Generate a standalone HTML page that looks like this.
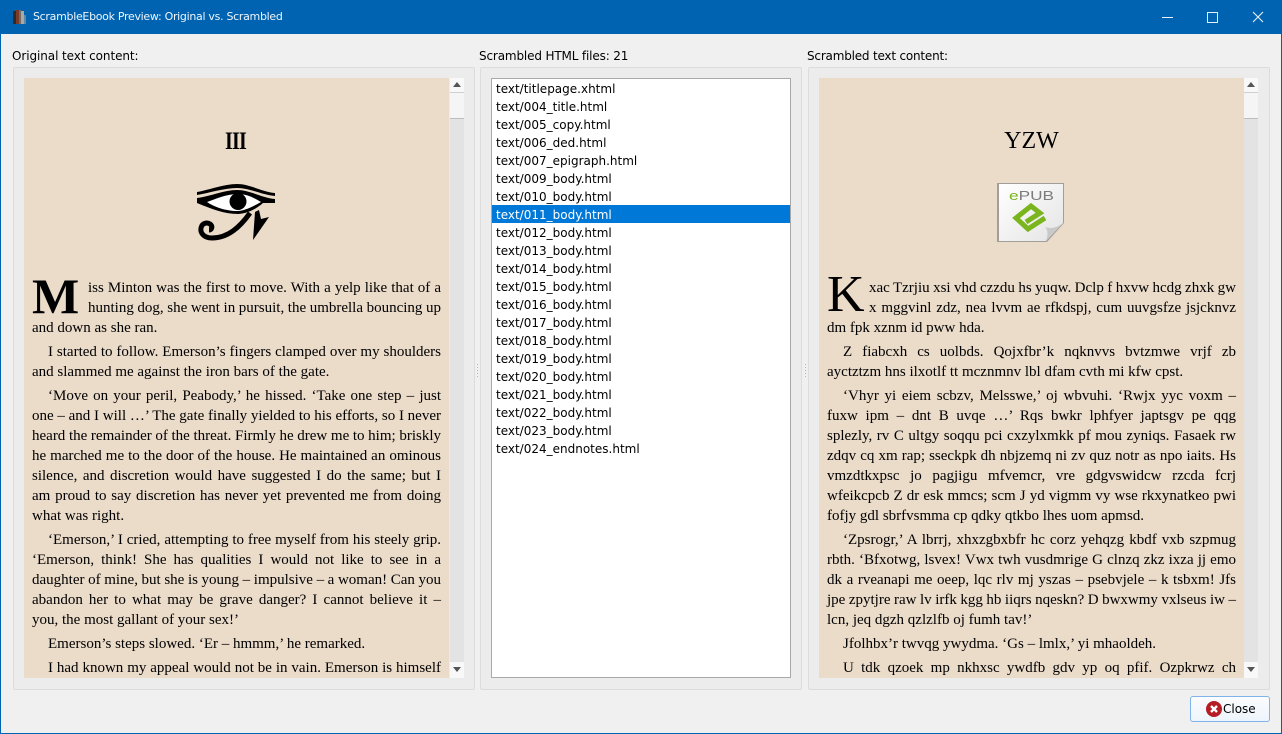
<!DOCTYPE html>
<html><head><meta charset="utf-8"><title>ScrambleEbook Preview</title>
<style>
html,body{margin:0;padding:0;width:1282px;height:734px;overflow:hidden;background:#f0f0f0}
div,span,svg{position:absolute}
.ui{font-family:"DejaVu Sans",sans-serif;font-size:12px;line-height:18px;color:#000;white-space:nowrap}
.lab{letter-spacing:-.08px}
.panel{border:1px solid #dcdcdc;background:#ececec;border-radius:2px;box-sizing:border-box}
.view{background:#ebdbc9;overflow:hidden;top:78px;height:600px;width:425px}
.l{font-family:"Liberation Serif",serif;font-size:15px;line-height:20px;height:20px;margin-top:1px;color:#000;white-space:nowrap;left:8px;width:409px}
.j{white-space:normal;text-align:justify;text-align-last:justify;word-spacing:-1.5px}
.i{left:24px;width:393px}
.d{left:64px;width:353px}
.sb{top:78px;width:14px;height:600px;background:#e3e3e3}
.b{left:0;width:14px;background:#f8f8f8}
.th{left:0;top:14px;width:14px;height:27px;background:#f5f5f5;border-top:1px solid #cfcfcf;border-bottom:1px solid #bdbdbd;box-sizing:border-box}
.up{left:3px;top:4px;width:0;height:0;border-left:4px solid transparent;border-right:4px solid transparent;border-bottom:5px solid #555}
.dn{left:3px;top:5px;width:0;height:0;border-left:4px solid transparent;border-right:4px solid transparent;border-top:5px solid #555}
.f{left:4px;height:18px;width:294px;line-height:20px}
.dots{width:1px;height:14px;top:364px;background:repeating-linear-gradient(#b5b5b5 0 1px,transparent 1px 3px)}
</style></head>
<body>
<div style="left:0;top:0;width:1282px;height:34px;background:#0063b1"></div>
<div style="left:0;top:34px;width:1px;height:700px;background:#0063b1"></div>
<div style="left:1281px;top:34px;width:1px;height:700px;background:#0063b1"></div>
<div style="left:0;top:733px;width:1282px;height:1px;background:#0063b1"></div>
<svg style="left:12px;top:9px" width="16" height="16" viewBox="0 0 16 16"><rect x="1" y="2" width="3" height="13" fill="#2b2b2b"/><rect x="4" y="1" width="3" height="14" fill="#7a3a28"/><rect x="7" y="1" width="2" height="14" fill="#6d6d6d"/><rect x="9" y="2" width="3" height="13" fill="#a9a9a0"/><rect x="12" y="6" width="2" height="9" fill="#5f87a8"/></svg>
<div class="ui" style="left:33px;top:8px;color:#eef5fb;font-size:11px;letter-spacing:-.3px">ScrambleEbook Preview: Original vs. Scrambled</div>
<div style="left:1162px;top:17px;width:11px;height:1px;background:#e8f2fa"></div>
<div style="left:1207px;top:12px;width:9px;height:9px;border:1px solid #e8f2fa"></div>
<svg style="left:1252px;top:11px" width="12" height="12" viewBox="0 0 12 12"><path d="M1 1L11 11M11 1L1 11" stroke="#e8f2fa" stroke-width="1.1" fill="none"/></svg>

<div class="ui lab" style="left:12px;top:47px">Original text content:</div>
<div class="ui lab" style="left:479px;top:47px;letter-spacing:-.15px">Scrambled HTML files: 21</div>
<div class="ui lab" style="left:807px;top:47px;letter-spacing:-.2px">Scrambled text content:</div>

<div class="panel" style="left:13px;top:67px;width:462px;height:623px"></div>
<div class="panel" style="left:480px;top:67px;width:322px;height:623px"></div>
<div class="panel" style="left:808px;top:67px;width:462px;height:623px"></div>
<div class="dots" style="left:477px"></div>
<div class="dots" style="left:805px"></div>

<!-- LEFT VIEW -->
<div class="view" style="left:24px">
<div style="left:-1px;top:51px;width:425px;height:26px;text-align:center;font:bold 25px/26px 'Liberation Serif',serif;color:#000;transform:scaleX(.8);letter-spacing:-1px">III</div>
<svg style="left:170px;top:103px" width="84" height="64" viewBox="0 0 84 64">
<path d="M3 11C15 9 30 3 43 3C56 3 68 11 81 12V15C68 14 56 7 43 7C30 7 15 12 3 14Z" fill="#000"/>
<path d="M3 17C18 15 30 9 43 9C56 9 68 17 81 18V22L69 22C60 30 50 33 44 33C30 33 18 28 3 22Z" fill="#000"/>
<path d="M13 21C22 18 32 13 44 13C54 13 62 18 67 21C58 26 50 30 43 30C32 30 20 26 13 21Z" fill="#fff"/>
<circle cx="44" cy="20.5" r="8.5" fill="#000"/>
<path d="M61 31L59 59L75 36L67 38L65 29Z" fill="#000"/>
<path d="M56 32C46 46 34 57 18 57C10 57 6 52 7 47C8 42 13 41 16 43C19 45 18 49 15 49" fill="none" stroke="#000" stroke-width="5"/>
</svg>
<div style="left:8px;top:196px;width:52px;height:44px;font:bold 50px/44px 'Liberation Serif',serif;color:#000;white-space:nowrap">M</div>
<div class="l j d" style="top:199px">iss Minton was the first to move. With a yelp like that of a</div>
<div class="l j d" style="top:219px">hunting dog, she went in pursuit, the umbrella bouncing up</div>
<div class="l" style="top:239px">and down as she ran.</div>
<div class="l j i" style="top:263px">I started to follow. Emerson’s fingers clamped over my shoulders</div>
<div class="l" style="top:283px">and slammed me against the iron bars of the gate.</div>
<div class="l j i" style="top:307px">‘Move on your peril, Peabody,’ he hissed. ‘Take one step – just</div>
<div class="l j" style="top:327px">one – and I will …’ The gate finally yielded to his efforts, so I never</div>
<div class="l j" style="top:347px">heard the remainder of the threat. Firmly he drew me to him; briskly</div>
<div class="l j" style="top:367px">he marched me to the door of the house. He maintained an ominous</div>
<div class="l j" style="top:387px">silence, and discretion would have suggested I do the same; but I</div>
<div class="l j" style="top:407px">am proud to say discretion has never yet prevented me from doing</div>
<div class="l" style="top:427px">what was right.</div>
<div class="l j i" style="top:451px">‘Emerson,’ I cried, attempting to free myself from his steely grip.</div>
<div class="l j" style="top:471px">‘Emerson, think! She has qualities I would not like to see in a</div>
<div class="l j" style="top:491px">daughter of mine, but she is young – impulsive – a woman! Can you</div>
<div class="l j" style="top:511px">abandon her to what may be grave danger? I cannot believe it –</div>
<div class="l" style="top:531px">you, the most gallant of your sex!’</div>
<div class="l i" style="top:555px">Emerson’s steps slowed. ‘Er – hmmm,’ he remarked.</div>
<div class="l j i" style="top:579px">I had known my appeal would not be in vain. Emerson is himself</div>
</div>
<div class="sb" style="left:450px"><div class="b" style="top:0;height:14px"><div class="up"></div></div><div class="th"></div><div class="b" style="top:584px;height:16px"><div class="dn"></div></div></div>

<!-- LIST -->
<div style="left:491px;top:78px;width:300px;height:600px;background:#fff;border:1px solid #a9a9a9;box-sizing:border-box">
<div style="left:0;top:126px;width:298px;height:18px;background:#0078d7"></div>
<div class="ui f" style="top:0">text/titlepage.xhtml</div>
<div class="ui f" style="top:18px">text/004_title.html</div>
<div class="ui f" style="top:36px">text/005_copy.html</div>
<div class="ui f" style="top:54px">text/006_ded.html</div>
<div class="ui f" style="top:72px">text/007_epigraph.html</div>
<div class="ui f" style="top:90px">text/009_body.html</div>
<div class="ui f" style="top:108px">text/010_body.html</div>
<div class="ui f" style="top:126px;color:#fff">text/011_body.html</div>
<div class="ui f" style="top:144px">text/012_body.html</div>
<div class="ui f" style="top:162px">text/013_body.html</div>
<div class="ui f" style="top:180px">text/014_body.html</div>
<div class="ui f" style="top:198px">text/015_body.html</div>
<div class="ui f" style="top:216px">text/016_body.html</div>
<div class="ui f" style="top:234px">text/017_body.html</div>
<div class="ui f" style="top:252px">text/018_body.html</div>
<div class="ui f" style="top:270px">text/019_body.html</div>
<div class="ui f" style="top:288px">text/020_body.html</div>
<div class="ui f" style="top:306px">text/021_body.html</div>
<div class="ui f" style="top:324px">text/022_body.html</div>
<div class="ui f" style="top:342px">text/023_body.html</div>
<div class="ui f" style="top:360px">text/024_endnotes.html</div>
</div>

<!-- RIGHT VIEW -->
<div class="view" style="left:819px">
<div style="left:0;top:50px;width:425px;height:26px;text-align:center;font:24px/26px 'Liberation Serif',serif;color:#000">YZW</div>
<svg style="left:176px;top:103px" width="72" height="64" viewBox="0 0 72 64">
<defs><linearGradient id="g" x1="0" y1="0" x2="1" y2="1"><stop offset="0" stop-color="#fff"/><stop offset="1" stop-color="#e4e4e4"/></linearGradient></defs>
<path d="M2 2H69V42L52 61H2Z" fill="#8a8a8a" opacity=".75"/>
<path d="M4 3H68V42L51 60H4Z" fill="url(#g)"/>
<path d="M68 42L51 60C54 52 52 48 50 46C56 48 62 47 68 42Z" fill="#c9c9c9"/>
<text x="14" y="19" font-family="Liberation Sans,sans-serif" font-size="13" fill="#7d7d7d" textLength="45" lengthAdjust="spacingAndGlyphs"><tspan fill="#7ab51d">e</tspan>PUB</text>
<path d="M50 37L33 48L21 37L36 25L45 32L31 41" fill="none" stroke="#7ab51d" stroke-width="5"/>
</svg>
<div style="left:8px;top:195px;width:40px;height:44px;font:52px/44px 'Liberation Serif',serif;color:#000;white-space:nowrap">K</div>
<div class="l j d" style="top:199px;left:50px;width:367px">xac Tzrjiu xsi vhd czzdu hs yuqw. Dclp f hxvw hcdg zhxk gw</div>
<div class="l j d" style="top:219px;left:50px;width:367px">x mggvinl zdz, nea lvvm ae rfkdspj, cum uuvgsfze jsjcknvz</div>
<div class="l" style="top:239px">dm fpk xznm id pww hda.</div>
<div class="l j i" style="top:263px">Z fiabcxh cs uolbds. Qojxfbr’k nqknvvs bvtzmwe vrjf zb</div>
<div class="l" style="top:283px">ayctztzm hns ilxotlf tt mcznmnv lbl dfam cvth mi kfw cpst.</div>
<div class="l j i" style="top:307px">‘Vhyr yi eiem scbzv, Melsswe,’ oj wbvuhi. ‘Rwjx yyc voxm –</div>
<div class="l j" style="top:327px">fuxw ipm – dnt B uvqe …’ Rqs bwkr lphfyer japtsgv pe qqg</div>
<div class="l j" style="top:347px">splezly, rv C ultgy soqqu pci cxzylxmkk pf mou zyniqs. Fasaek rw</div>
<div class="l j" style="top:367px">zdqv cq xm rap; sseckpk dh nbjzemq ni zv quz notr as npo iaits. Hs</div>
<div class="l j" style="top:387px">vmzdtkxpsc jo pagjigu mfvemcr, vre gdgvswidcw rzcda fcrj</div>
<div class="l j" style="top:407px">wfeikcpcb Z dr esk mmcs; scm J yd vigmm vy wse rkxynatkeo pwi</div>
<div class="l" style="top:427px">fofjy gdl sbrfvsmma cp qdky qtkbo lhes uom apmsd.</div>
<div class="l j i" style="top:451px">‘Zpsrogr,’ A lbrrj, xhxzgbxbfr hc corz yehqzg kbdf vxb szpmug</div>
<div class="l j" style="top:471px">rbth. ‘Bfxotwg, lsvex! Vwx twh vusdmrige G clnzq zkz ixza jj emo</div>
<div class="l j" style="top:491px">dk a rveanapi me oeep, lqc rlv mj yszas – psebvjele – k tsbxm! Jfs</div>
<div class="l j" style="top:511px">jpe zpytjre raw lv irfk kgg hb iiqrs nqeskn? D bwxwmy vxlseus iw –</div>
<div class="l" style="top:531px">lcn, jeq dgzh qzlzlfb oj fumh tav!’</div>
<div class="l i" style="top:555px">Jfolhbx’r twvqg ywydma. ‘Gs – lmlx,’ yi mhaoldeh.</div>
<div class="l j i" style="top:579px">U tdk qzoek mp nkhxsc ywdfb gdv yp oq pfif. Ozpkrwz ch</div>
</div>
<div class="sb" style="left:1244px"><div class="b" style="top:0;height:14px"><div class="up"></div></div><div class="th"></div><div class="b" style="top:584px;height:16px"><div class="dn"></div></div></div>

<!-- CLOSE -->
<div style="left:1190px;top:696px;width:80px;height:26px;box-sizing:border-box;border:1px solid #7eb4ea;border-radius:3px;background:linear-gradient(#fbfcfe,#edf4fb)"></div>
<svg style="left:1206px;top:701px" width="16" height="16" viewBox="0 0 16 16"><circle cx="8" cy="8" r="8" fill="#b51c24"/><path d="M5 5L11 11M11 5L5 11" stroke="#fff" stroke-width="2.4" fill="none"/></svg>
<div class="ui" style="left:1223px;top:700px">Close</div>
</body></html>
